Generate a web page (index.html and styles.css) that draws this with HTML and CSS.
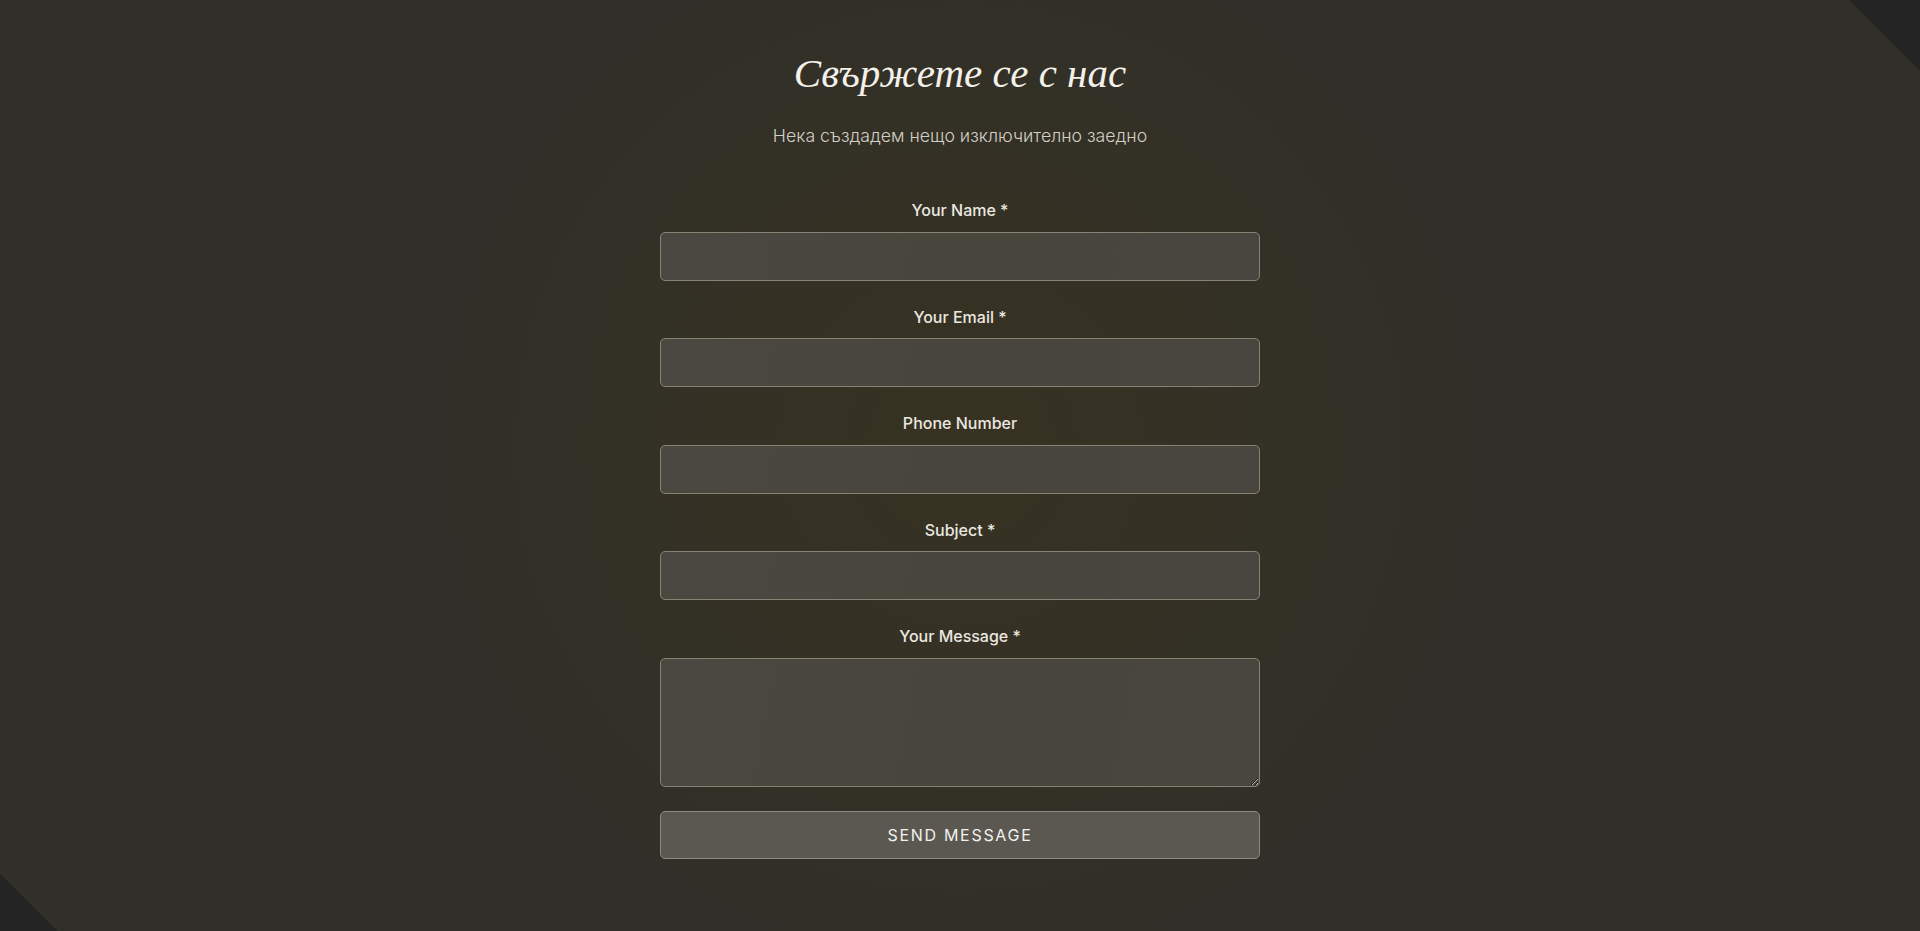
FILE: index.html
```html
<!DOCTYPE html>
<html lang="bg">
<head>
<meta charset="utf-8">
<title>Свържете се с нас</title>
<link rel="stylesheet" href="styles.css">
</head>
<body>
<main class="page">
  <section class="contact">
    <h1 class="contact-title">Свържете се с нас</h1>
    <p class="contact-subtitle">Нека създадем нещо изключително заедно</p>
    <form class="contact-form">
      <div class="form-group">
        <label class="form-label" for="name">Your Name *</label>
        <input class="form-input" id="name" type="text">
      </div>
      <div class="form-group">
        <label class="form-label" for="email">Your Email *</label>
        <input class="form-input" id="email" type="email">
      </div>
      <div class="form-group">
        <label class="form-label" for="phone">Phone Number</label>
        <input class="form-input" id="phone" type="tel">
      </div>
      <div class="form-group">
        <label class="form-label" for="subject">Subject *</label>
        <input class="form-input" id="subject" type="text">
      </div>
      <div class="form-group">
        <label class="form-label" for="message">Your Message *</label>
        <textarea class="form-input form-textarea" id="message"></textarea>
      </div>
      <button class="form-submit" type="button">SEND MESSAGE</button>
    </form>
  </section>
</main>
</body>
</html>
```
FILE: styles.css
```css
* { box-sizing: border-box; }

html, body {
  margin: 0;
  height: 100%;
}

body {
  font-family: Inter, "Noto Sans", sans-serif;
  color: #ece9e2;
  background-color: #312f29;
  background-image:
    linear-gradient(45deg, #242424 0, #242424 2%, rgba(36,36,36,0) 2%, rgba(36,36,36,0) 97.5%, #242424 97.5%),
    radial-gradient(circle at 50% 48%, rgba(56, 51, 32, 0.85) 0, rgba(53, 49, 35, 0.55) 330px, rgba(49, 47, 41, 0) 540px);
  overflow: hidden;
}

.page {
  display: flex;
  justify-content: center;
  padding-top: 49px;
}

.contact {
  width: 600px;
  display: flex;
  flex-direction: column;
  align-items: center;
}

.contact-title {
  margin: 0 0 28px;
  font-family: "Liberation Serif", "DejaVu Serif", serif;
  font-style: italic;
  font-weight: 400;
  font-size: 41px;
  line-height: normal;
  color: #f4f1ea;
  white-space: nowrap;
}

.contact-subtitle {
  margin: 0 0 52px;
  font-family: Inter, sans-serif;
  font-weight: 300;
  font-size: 17.7px;
  line-height: normal;
  color: #d3cfc5;
}

.contact-form {
  width: 100%;
  display: flex;
  flex-direction: column;
}

.form-group {
  display: flex;
  flex-direction: column;
  margin-bottom: 24px;
}

.form-label {
  display: block;
  text-align: center;
  font-size: 16px;
  font-weight: 500;
  line-height: 1.6;
  margin-bottom: 8px;
  color: #ebe8e1;
}

.form-input {
  display: block;
  width: 100%;
  height: 49px;
  padding: 14px 16px;
  font-family: Inter, sans-serif;
  font-size: 16px;
  color: #f0ede6;
  background: linear-gradient(100deg, #4a4840 0%, #48453d 50%, #49463f 100%);
  border: 1px solid #878373;
  border-radius: 5px;
  outline: none;
}

.form-textarea {
  height: 129px;
  resize: vertical;
}

.form-submit {
  display: block;
  width: 100%;
  height: 48px;
  font-family: Inter, sans-serif;
  font-size: 16px;
  font-weight: 400;
  letter-spacing: 1.7px;
  color: #f3f1ec;
  background: #5a5850;
  border: 1px solid #8d897d;
  border-radius: 5px;
  cursor: pointer;
}
```
